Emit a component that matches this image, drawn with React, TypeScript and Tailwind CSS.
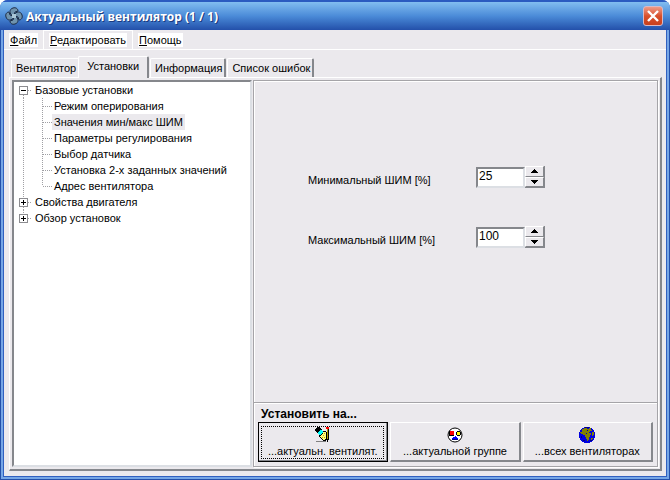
import { useState } from "react";
import clsx from "clsx";

const menu = ["Файл", "Редактировать", "Помощь"];

const tabs = ["Вентилятор", "Установки", "Информация", "Список ошибок"];

const tree = [
  {
    label: "Базовые установки",
    children: [
      "Режим оперирования",
      "Значения мин/макс ШИМ",
      "Параметры регулирования",
      "Выбор датчика",
      "Установка 2-х заданных значений",
      "Адрес вентилятора",
    ],
  },
  { label: "Свойства двигателя", children: [] },
  { label: "Обзор установок", children: [] },
];

const dotsY = "bg-[repeating-linear-gradient(to_bottom,#a0a0a4_0_1px,transparent_1px_2px)]";
const dotsX = "bg-[repeating-linear-gradient(to_right,#a0a0a4_0_1px,transparent_1px_2px)]";

function FanIcon() {
  return (
    <svg width="18" height="18" viewBox="0 0 18 18" fill="#6f93ad" stroke="#1d2c44" strokeWidth="1">
      <path d="M8 9C4 7 4 2 8 1c3-1 5 1 5 3l-3 1-1 3z" />
      <path d="M9 8c2-4 7-4 8 0 1 3-1 5-3 5l-1-3-3-1z" />
      <path d="M10 9c4 2 4 7 0 8-3 1-5-1-5-3l3-1 1-3z" />
      <path d="M9 10c-2 4-7 4-8 0-1-3 1-5 3-5l1 3 3 1z" />
      <rect x="7" y="7" width="4" height="4" fill="#a9c6d6" stroke="none" />
    </svg>
  );
}

function HandIcon() {
  return (
    <svg className="shrink-0" width="16" height="16" viewBox="0 0 16 16" shapeRendering="crispEdges">
      <path d="M1 1h1V0h3v1h1v1h1v1H5v1H4v1H3v1H2V5H1V4H0V2h1z" fill="#000" />
      <path d="M5 3h2v1h1v2H7v1H6v1H4V7H3V5h1V4h1z" fill="#0ff" />
      <path d="M8 4h3v1h1v8h-1v1H8v-1H7v-1H6v-1H5v-1H4V8h2V7h1V6h1z" fill="#000" />
      <path d="M8 5h3v7h-1v1H8v-1H7v-1H6v-1H5V9h1V8h1V7h1z" fill="#ffff80" />
      <path d="M9 6h1v1H9zM8 8h1v1H8zM9 10h1v1H9zM7 10h1v1H7z" fill="#c8b400" />
      <path d="M12 1h2v12h-1v2h-1z" fill="#000" />
      <path d="M11 0h3v2h-3z" fill="#f00" />
      <path d="M12 2h1v10h-1z" fill="#b0a000" />
      <path d="M1 14h10v1H1z" fill="#808080" />
    </svg>
  );
}

function GroupIcon() {
  return (
    <svg className="shrink-0" width="16" height="16" viewBox="0 0 16 16">
      <circle cx="8" cy="8" r="7" fill="#fff" stroke="#000" />
      <g shapeRendering="crispEdges">
        <path d="M2 4h5v5H2z" fill="#000" />
        <path d="M3 4h4v4H3z" fill="#f00" />
        <path d="M10 4h3v1h1v3h-1v1h-3V8H9V5h1z" fill="#000" />
        <path d="M10 5h3v3h-3z" fill="#ff0" />
        <path d="M8 9h1v1h1v1h1v2H5v-2h1v-1h2z" fill="#00f" />
        <path d="M5 12h6v1H5z" fill="#000080" />
      </g>
    </svg>
  );
}

function GlobeIcon() {
  return (
    <svg className="shrink-0" width="16" height="16" viewBox="0 0 16 16" shapeRendering="crispEdges">
      <path d="M5 0h6v1h2v1h1v1h1v2h1v6h-1v2h-1v1h-1v1h-2v1H5v-1H3v-1H2v-1H1v-2H0V5h1V3h1V2h1V1h2z" fill="#0000e0" />
      <path d="M3 2h2V1h3v1h2V1h2v2h1v1h-2v1h-1v1h2v2h-1v2h-1v3H9v1H8v-2H7v-2H6V8H4V7H2V5h1zM13 5h2v3h-1v1h-1zM12 11h2v1h-1v1h-1zM1 5h1v1H1z" fill="#808000" />
      <path d="M8 3h1v1H8zM7 6h1v1H7z" fill="#0000a0" />
      <path d="M11 13h2v1h-2zM4 13h2v1H4zM2 9h1v2H2zM6 0h4v1H6z" fill="#000080" />
    </svg>
  );
}

const targets = [
  { label: "...актуальн. вентилят.", icon: <HandIcon /> },
  { label: "...актуальной группе", icon: <GroupIcon /> },
  { label: "...всех вентиляторах", icon: <GlobeIcon /> },
];

function NodeBox({ open, first, last }: { open: boolean; first: boolean; last: boolean }) {
  return (
    <span className="flex h-4 w-[9px] flex-col items-center">
      <span className={clsx("h-1 w-px", !first && dotsY)} />
      <svg width="9" height="9" viewBox="0 0 9 9" shapeRendering="crispEdges">
        <path d="M0 0h9v9H0z" fill="#8c8c90" />
        <path d="M1 1h7v7H1z" fill="#fff" />
        <path d={open ? "M2 4h5v1H2z" : "M2 4h5v1H2zM4 2h1v5H4z"} fill="#000" />
      </svg>
      <span className={clsx("h-[3px] w-px", !last && dotsY)} />
    </span>
  );
}

function SettingsTree() {
  const [open, setOpen] = useState<string[]>(["Базовые установки"]);
  const [selected, setSelected] = useState("Значения мин/макс ШИМ");

  const toggle = (label: string) =>
    setOpen((current) =>
      current.includes(label) ? current.filter((l) => l !== label) : [...current, label]
    );

  return (
    <ul className="pl-[5px]">
      {tree.map((node, i) => (
        <li key={node.label}>
          <button onClick={() => toggle(node.label)} className="flex h-4 items-center whitespace-nowrap">
            <NodeBox open={open.includes(node.label)} first={i === 0} last={i === tree.length - 1} />
            <span className={clsx("h-px w-1", dotsX)} />
            <span className="px-[3px]">{node.label}</span>
          </button>
          {open.includes(node.label) && (
            <ul>
              {node.children.map((child, j) => (
                <li key={child}>
                  <button onClick={() => setSelected(child)} className="flex h-4 items-center whitespace-nowrap">
                    <span className="flex h-4 w-[23px] pl-1">
                      <span className={clsx("w-px", dotsY)} />
                    </span>
                    <span
                      className={clsx("w-px self-start", dotsY, j === node.children.length - 1 ? "h-2" : "h-4")}
                    />
                    <span className={clsx("h-px w-[9px]", dotsX)} />
                    <span className={clsx("h-4 px-[2px]", selected === child && "bg-[#ebe9ed]")}>{child}</span>
                  </button>
                </li>
              ))}
            </ul>
          )}
        </li>
      ))}
    </ul>
  );
}

function SpinField({ id, label, initial }: { id: string; label: string; initial: number }) {
  const [value, setValue] = useState(initial);
  const arrow =
    "flex flex-1 items-center justify-center border border-t-white border-l-white border-r-[#85878c] border-b-[#85878c]";

  return (
    <div className="flex items-center">
      <label htmlFor={id} className="w-42 pt-[6px]">
        {label}
      </label>
      <input
        id={id}
        value={value}
        onChange={(e) => setValue(Number(e.target.value) || 0)}
        className="h-[21px] w-[49px] border-2 border-t-[#85878c] border-r-[#dcdfe4] border-b-[#dcdfe4] border-l-[#85878c] bg-white pl-px pb-[2px] text-xs outline-none"
      />
      <div className="flex h-[22px] w-5 flex-col border-r border-b border-[#85878c]">
        <button aria-label="Больше" onClick={() => setValue(Math.min(100, value + 1))} className={arrow}>
          <svg width="7" height="4" viewBox="0 0 7 4" shapeRendering="crispEdges">
            <path d="M3 0h1v1h1v1h1v1h1v1H0V3h1V2h1V1h1z" />
          </svg>
        </button>
        <button aria-label="Меньше" onClick={() => setValue(Math.max(0, value - 1))} className={arrow}>
          <svg width="7" height="4" viewBox="0 0 7 4" shapeRendering="crispEdges">
            <path d="M0 0h7v1H6v1H5v1H4v1H3V3H2V2H1V1H0z" />
          </svg>
        </button>
      </div>
    </div>
  );
}

export default function App() {
  const [tab, setTab] = useState("Установки");

  return (
    <div className="flex h-screen flex-col overflow-hidden rounded-t-lg bg-[#2d5cb8] font-['Liberation_Sans',Arial,sans-serif] text-[11px] leading-4 text-black">
      <header className="flex h-[30px] shrink-0 items-center gap-[3px] border-t-2 border-[#2b5bc0] bg-linear-to-b from-[#82bdf0] via-[#4b8bd8] to-[#2450aa] pr-[7px] pl-[5px]">
        <FanIcon />
        <h1 className="flex-1 pt-px font-['Open_Sans',sans-serif] text-xs font-bold text-white [text-shadow:1px_1px_#1a3a80]">
          Актуальный вентилятор (1 / 1)
        </h1>
        <button
          aria-label="Закрыть"
          className="flex size-5 items-center justify-center rounded-[3px] border border-[#d9b9c4] bg-linear-to-b from-[#ee9a86] via-[#d8502c] to-[#c8401c]"
        >
          <svg width="12" height="12" viewBox="0 0 12 12" stroke="#fff" strokeWidth="2.4">
            <path d="M1 1l10 10M11 1L1 11" />
          </svg>
        </button>
      </header>

      <div className="flex min-h-0 flex-1 border-x border-b border-[#2450aa] bg-[#76a6e6] px-[2px] pb-[2px]">
        <div className="flex min-w-0 flex-1 flex-col border-x border-b border-[#3060c0] bg-[#ebe9ed]">
          <nav className="flex h-5 shrink-0 border-b border-white">
            {menu.map((item, i) => (
              <button
                key={item}
                className={clsx("flex items-center px-[5px]", i === 1 && "border-x border-t border-white")}
              >
                <span className="bg-white px-px leading-[14px]">
                  <u>{item[0]}</u>
                  {item.slice(1)}
                </span>
              </button>
            ))}
          </nav>

          <div className="flex min-h-0 flex-1 flex-col pt-[6px] pr-1 pb-[5px] pl-[5px]">
            <div role="tablist" className="flex h-[21px] shrink-0 items-end gap-px pl-[2px]">
              {tabs.map((name) => (
                <button
                  key={name}
                  role="tab"
                  aria-selected={tab === name}
                  onClick={() => setTab(name)}
                  className={clsx(
                    "rounded-t-xs border-t border-r-2 border-l border-t-white border-r-[#85878c] border-l-white whitespace-nowrap",
                    tab === name ? "z-10 -mb-px -ml-[3px] h-[22px] bg-[#ebe9ed] px-2 pb-1" : "h-[19px] pr-[2px] pl-1"
                  )}
                >
                  {name}
                </button>
              ))}
            </div>

            <main className="flex min-h-0 flex-1 border-t border-r-2 border-b-2 border-l border-t-white border-r-[#85878c] border-b-[#85878c] border-l-white p-[2px]">
              <div className="w-60 shrink-0 overflow-hidden border-2 border-t-[#85878c] border-r-[#dcdfe4] border-b-[#dcdfe4] border-l-[#85878c] bg-white">
                <SettingsTree />
              </div>

              <div className="ml-px flex min-w-0 flex-1 flex-col border border-[#a5a4a8] shadow-[1px_1px_#fff,inset_1px_1px_#fff]">
                <section className="flex flex-1 flex-col gap-[38px] pt-[85px] pl-[54px]">
                  <SpinField id="min-pwm" label="Минимальный ШИМ [%]" initial={25} />
                  <SpinField id="max-pwm" label="Максимальный ШИМ [%]" initial={100} />
                </section>

                <section className="border-t border-[#a5a4a8] px-1 pb-1 shadow-[inset_0_1px_#fff]">
                  <h2 className="px-[3px] pt-[3px] text-xs font-bold leading-4">Установить на...</h2>
                  <div className="grid grid-cols-3 gap-[2px]">
                    {targets.map((t, i) => (
                      <button
                        key={t.label}
                        className={clsx(
                          "flex h-10 flex-col border-t border-r-2 border-b-2 border-l border-t-white border-r-[#85878c] border-b-[#85878c] border-l-white px-[2px] pt-[3px] pb-px whitespace-nowrap",
                          i === 0 && "outline -outline-offset-1 outline-black"
                        )}
                      >
                        <span
                          className={clsx(
                            "flex h-full w-full flex-col items-center border",
                            i === 0 ? "border-dotted border-black" : "border-transparent"
                          )}
                        >
                          {t.icon}
                          <span className="leading-4">{t.label}</span>
                        </span>
                      </button>
                    ))}
                  </div>
                </section>
              </div>
            </main>
          </div>
        </div>
      </div>
    </div>
  );
}
